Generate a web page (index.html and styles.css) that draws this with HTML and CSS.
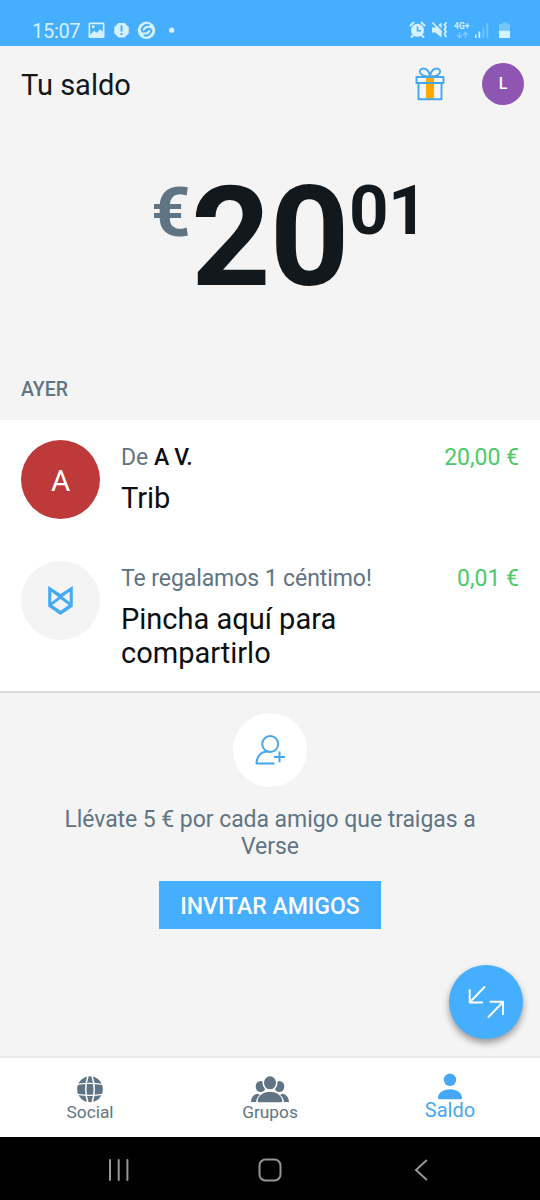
FILE: index.html
```html
<!DOCTYPE html>
<html lang="es">
<head>
<meta charset="utf-8">
<title>Tu saldo</title>
<link rel="stylesheet" href="styles.css">
</head>
<body>
<div class="app">
  <div class="status">
    <span class="clock">15:07</span>
    <svg class="status-left" width="90" height="20" viewBox="0 0 90 20">
      <path fill="currentColor" fill-rule="evenodd" d="M2 2.500h13a1.500 1.500 0 0 1 1.500 1.500v12.500a1.500 1.500 0 0 1-1.500 1.500h-13a1.500 1.500 0 0 1-1.500-1.500v-12.500a1.500 1.500 0 0 1 1.500-1.500zM2.200 14.800l4-4 2.500 2 3.500-3.500 2.600 2.500v-7.600h-12.600zM4 5.500v2.500h2.500v-2.500z"/>
      <path fill="currentColor" d="M30.500 3h6l4.300 4.300v6l-4.300 4.300h-6l-4.300-4.300v-6z"/>
      <path stroke="#45aeff" stroke-width="2" d="M33.500 5.500v6M33.500 13v2"/>
      <circle cx="58.500" cy="10.300" r="8.700" fill="currentColor"/>
      <path fill="none" stroke="#45aeff" stroke-width="2" stroke-linecap="round" d="M60.500 5.300c-2-1.500-5 1-6.300 2.800-1.500 2.400.8 4.400 2.400 3.200l2.600-2.300M56.500 15.300c2 1.500 5-1 6.300-2.800 1.500-2.400-.8-4.400-2.400-3.200l-2.600 2.300"/>
      <circle cx="83.700" cy="10.200" r="2.600" fill="currentColor"/>
    </svg>
    <svg class="status-right" width="104" height="20" viewBox="0 0 104 20">
      <g fill="none" stroke="currentColor" stroke-linecap="round">
        <path stroke-width="2" d="M1.500 5.500l3-3M12.500 2.500l3 3M4 15.500l-1.500 1.500M13 15.500l1.500 1.500"/>
        <path stroke-width="1.800" d="M37 3l-1.500 2 1.500 2.200-1.500 2.200 1.500 2.300-1.500 2.300 1.500 2.500"/>
      </g>
      <circle cx="8.500" cy="10.300" r="6.500" fill="currentColor"/>
      <path fill="none" stroke="#45aeff" stroke-width="1.600" d="M8.500 6.500v4.200h3.500"/>
      <path fill="currentColor" d="M23 7.500h3.500l6-5v15l-6-5H23z"/>
      <path stroke="#45aeff" stroke-width="1.500" d="M25 1.500l9 9.500"/>
      <path stroke="currentColor" stroke-width="1.700" d="M23.500 2.500l9 10"/>
      <g fill="none" stroke="currentColor" stroke-width="1.300" opacity=".45"><path d="M50.500 12v5.500M48 15.200l2.500 2.500 2.500-2.500M56.500 18v-5.500M54 15l2.500-2.500 2.500 2.500"/></g>
      <text class="network" x="45" y="9.300">4G+</text>
      <g fill="currentColor"><path d="M66 14.500h1.500v3.500h-1.500zM69.500 11.500h1.700v6.500h-1.700z"/><path opacity=".35" d="M73.500 7.500h1.700v10.500h-1.700zM77.500 3h1.700v15h-1.700z"/></g>
      <path fill="currentColor" opacity=".35" d="M93.500 2.500h5v1.500h2.500v7h-11v-7h3.500z"/>
      <path fill="currentColor" d="M90 10.800h11v7.200h-11z"/>
    </svg>
  </div>

  <header class="header">
    <h1 class="title">Tu saldo</h1>
    <svg class="gift" width="30" height="34" viewBox="0 0 30 34">
      <path fill="#ffa800" d="M11 10h8v22h-8z"/>
      <g fill="none" stroke="#45a8ee" stroke-width="1.900" stroke-linejoin="round">
        <path d="M1.500 10h27v6h-27zM3.500 16h23v16.200h-23z"/>
        <path d="M15 9.500C9 10 5 7.500 4.800 4.800 4.800 2 8 .9 10.500 2 13 3 14.500 6 15 9.500zM15 9.500c6 .5 10-2 10.200-4.700C25.200 2 22 .9 19.500 2 17 3 15.500 6 15 9.500z"/>
      </g>
    </svg>
    <span class="profile">L</span>
  </header>

  <section class="balance">
    <span class="currency">€</span><span class="whole">20</span><span class="cents">01</span>
  </section>

  <h2 class="day">AYER</h2>
  <section class="list">
    <article class="row">
      <span class="avatar avatar-red">A</span>
      <div class="detail">
        <div class="meta"><span>De <b class="sender">A V.</b></span><span class="amount">20,00 €</span></div>
        <p class="concept">Trib</p>
      </div>
    </article>
    <article class="row">
      <span class="avatar">
        <svg width="25" height="29" viewBox="0 0 25 29"><path fill="#45aaf5" fill-rule="evenodd" d="M.2 0L12.500 8 24.800 0v20.500L12.500 29 .2 20.500zM3.300 5.800v10.400l7-5.200zM21.700 5.800l-7 4.900 7 5.500zM12.500 13L4.300 19l8.200 5.800 8.200-5.800z"/></svg>
      </span>
      <div class="detail">
        <div class="meta"><span class="gift-note">Te regalamos 1 céntimo!</span><span class="amount">0,01 €</span></div>
        <p class="concept">Pincha aquí para<br>compartirlo</p>
      </div>
    </article>
  </section>

  <section class="promo">
    <span class="promo-icon">
      <svg width="32" height="32" viewBox="0 0 32 32"><g fill="none" stroke="#45a8ee" stroke-width="2" stroke-linejoin="round"><circle cx="16.200" cy="10" r="8"/><path d="M20.500 29.500H2.500c0-7 4.500-12 11-12h2M25.500 17.500v10.800M20 22.900h11"/></g></svg>
    </span>
    <p class="promo-text">Llévate 5 € por cada amigo que traigas a<br>Verse</p>
    <button class="invite">INVITAR AMIGOS</button>
  </section>

  <button class="fab" aria-label="Enviar o pedir">
    <svg width="38" height="36" viewBox="0 0 38 36"><path fill="none" stroke="#fff" stroke-width="1.900" stroke-linecap="round" stroke-linejoin="round" d="M17.500 3L3 18M2.700 6v12.500h12.500M21.500 33l14.500-15M23.500 17.700h12.500v12.500"/></svg>
  </button>

  <nav class="tabs">
    <a class="tab">
      <svg width="26" height="27" viewBox="0 0 26 27"><ellipse cx="13" cy="13.300" rx="12.800" ry="13" fill="currentColor"/><g fill="none" stroke="#fff" stroke-width="1.300"><path d="M0 8.300q13-1.800 26 0M0 18.400q13 1.800 26 0"/><path d="M11 0Q6.500 13.300 11 27M15 0Q19.500 13.300 15 27" stroke-width="1.500"/></g></svg>
      <span>Social</span>
    </a>
    <a class="tab">
      <svg width="38" height="27" viewBox="0 0 38 27"><g fill="currentColor"><ellipse cx="9.700" cy="10.500" rx="5" ry="5.500"/><ellipse cx="28.300" cy="10.500" rx="5" ry="5.500"/><path d="M0 26c0-4 2.500-7.700 6.500-8.300L9 19c-2.500 1.500-3.500 4-4 7zM38 26c0-4-2.500-7.700-6.500-8.300L29 19c2.500 1.500 3.500 4 4 7z"/></g><ellipse cx="19" cy="6.800" rx="6.800" ry="7.200" fill="currentColor" stroke="#fff" stroke-width="1.500"/><path fill="currentColor" d="M6.700 25c0-5 5.500-9.300 12.300-9.300s12.300 4.300 12.300 9.300q-.2 1.200-1.200 1.200h-22.200q-1 0-1.200-1.200z"/></svg>
      <span>Grupos</span>
    </a>
    <a class="tab tab-active">
      <svg width="26" height="27" viewBox="0 0 26 27"><circle cx="13" cy="6.800" r="6.200" fill="currentColor"/><path fill="currentColor" d="M1 25c0-5 5-8.800 12-8.800s12 3.800 12 8.800q-.2 1.200-1.200 1.200h-21.600q-1 0-1.200-1.200z"/></svg>
      <span>Saldo</span>
    </a>
  </nav>

  <div class="system">
    <svg width="22" height="22" viewBox="0 0 22 22"><path fill="none" stroke="currentColor" stroke-width="2" stroke-linecap="round" d="M2 1v20M10.700 1v20M19.400 1v20"/></svg>
    <svg class="home" width="24" height="24" viewBox="0 0 24 24"><rect x="1.500" y="1.500" width="21" height="21" rx="6" fill="none" stroke="currentColor" stroke-width="2"/></svg>
    <svg width="14" height="22" viewBox="0 0 14 22"><path fill="none" stroke="currentColor" stroke-width="2" stroke-linecap="round" d="M12.300 1.500L2 11l10.300 9.500"/></svg>
  </div>
</div>
</body>
</html>
```
FILE: styles.css
```css
* { box-sizing: border-box; }
body { margin: 0; font-family: Roboto, "Liberation Sans", sans-serif; }
h1, h2, p { margin: 0; font-weight: 400; }
svg { display: block; flex: none; }
button { border: 0; padding: 0; font-family: inherit; color: #fff; }

.app {
  position: relative;
  display: flex;
  flex-direction: column;
  width: 540px;
  height: 1200px;
  overflow: hidden;
  background: #f4f4f4;
  white-space: nowrap;
}

.status {
  display: flex;
  height: 46px;
  padding: 20px 27px 0 32px;
  background: #45aeff;
  color: #d5f0ff;
}
.clock { width: 56px; font-size: 20px; line-height: 23px; letter-spacing: -.3px; }
.status-right { margin-left: auto; }
.network { font-size: 8.500px; font-weight: 700; fill: currentColor; }

.header { display: flex; align-items: center; height: 75px; padding: 0 16px 0 21px; }
.title { flex: 1; font-size: 29px; line-height: 34px; color: #11171b; padding-top: 3px; }
.gift { margin-right: 37px; }
.profile {
  width: 42px;
  height: 42px;
  border-radius: 50%;
  background: #8e55b3;
  color: #fff;
  font-size: 16px;
  font-weight: 500;
  line-height: 42px;
  text-align: center;
}

.balance {
  display: flex;
  height: 240px;
  padding: 47px 0 0 151px;
  color: #12181b;
  font-weight: 700;
}
.currency { width: 40px; color: #607484; font-size: 69px; line-height: 90px; }
.whole { width: 158px; font-size: 139px; line-height: 140px; letter-spacing: -1px; }
.cents { font-size: 69px; line-height: 85px; letter-spacing: -.5px; }

.day {
  height: 59px;
  padding: 17px 21px 0;
  color: #607484;
  font-size: 19.500px;
  font-weight: 500;
  line-height: 24px;
}

.list { height: 273px; background: #fff; border-bottom: 2px solid #dcdcdc; }
.row { display: flex; height: 121px; padding: 20px 21px 0; gap: 21px; }
.avatar {
  display: flex;
  align-items: center;
  justify-content: center;
  width: 79px;
  height: 79px;
  flex: none;
  border-radius: 50%;
  background: #f4f4f4;
}
.avatar-red { padding-top: 2px; background: #bd393a; color: #fff; font-size: 29.500px; }
.detail { flex: 1; padding-top: 4px; }
.meta { display: flex; justify-content: space-between; color: #607484; font-size: 23px; line-height: 27px; }
.gift-note { letter-spacing: -.08px; }
.sender { color: #0b0e10; font-weight: 500; letter-spacing: -.4px; }
.amount { color: #4acb6b; }
.concept { margin-top: 10px; color: #0b0e10; font-size: 29px; line-height: 34px; }

.promo { display: flex; flex-direction: column; align-items: center; padding-top: 20px; }
.promo-icon {
  display: flex;
  align-items: center;
  justify-content: center;
  width: 74px;
  height: 74px;
  border-radius: 50%;
  background: #fff;
}
.promo-text {
  margin-top: 19px;
  color: #607484;
  font-size: 23px;
  line-height: 27px;
  letter-spacing: -.06px;
  text-align: center;
}
.invite {
  width: 222px;
  height: 48px;
  margin-top: 21px;
  padding-top: 2px;
  background: #45aeff;
  font-size: 23px;
  font-weight: 500;
}

.fab {
  position: absolute;
  right: 17px;
  bottom: 161px;
  display: flex;
  align-items: center;
  justify-content: center;
  width: 74px;
  height: 74px;
  border-radius: 50%;
  background: #45aeff;
  box-shadow: 0 4px 7px rgba(0, 0, 0, .38);
}

.tabs {
  display: flex;
  height: 81px;
  margin-top: auto;
  border-top: 2px solid #e9e9e9;
  background: #fff;
}
.tab {
  display: flex;
  flex: 1;
  flex-direction: column;
  align-items: center;
  padding-top: 18px;
  color: #607484;
  font-size: 17.300px;
  line-height: 18px;
}
.tab-active { padding-top: 15px; color: #45a8f4; font-size: 20px; line-height: 20px; }

.system {
  display: flex;
  align-items: center;
  justify-content: space-between;
  height: 63px;
  padding: 2px 112px 0 108px;
  background: #000;
  color: #969696;
}
.home { margin-right: 5px; }
```
